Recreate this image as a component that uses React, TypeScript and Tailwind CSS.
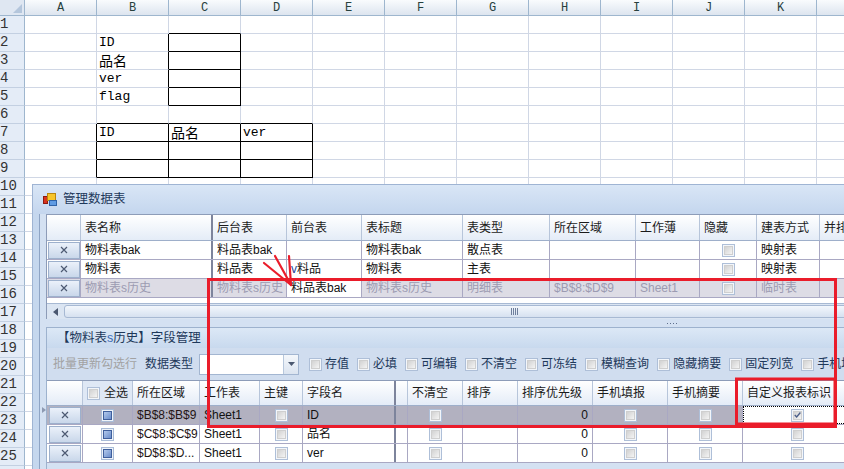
import React from "react";
import clsx from "clsx";

const ui = "font-['Liberation_Sans','Noto_Sans_CJK_SC',sans-serif]";
const sheetFont = "font-['Liberation_Mono','Noto_Sans_CJK_SC',monospace]";

const LETTERS = ["A", "B", "C", "D", "E", "F", "G", "H", "I", "J", "K", "L"];
const ROWS = Array.from({ length: 26 }, (_, i) => i + 1);

const SHEET_TEXT: Record<string, string> = {
  "2-1": "ID",
  "3-1": "品名",
  "4-1": "ver",
  "5-1": "flag",
  "7-1": "ID",
  "7-2": "品名",
  "7-3": "ver",
};

// ruled ranges: C2:C5 and B7:D9
const rightRuled = (r: number, c: number) =>
  ((c === 1 || c === 2) && r >= 2 && r <= 5) || (c <= 3 && r >= 7 && r <= 9);
const bottomRuled = (r: number, c: number) =>
  (c === 2 && r >= 1 && r <= 5) || (c >= 1 && c <= 3 && r >= 6 && r <= 9);

const SheetText = ({ text }: { text: string }) =>
  /[\u4e00-\u9fff]/.test(text) ? (
    <span className="font-['Noto_Sans_CJK_SC',sans-serif] text-[14px] leading-[17px]">{text}</span>
  ) : (
    <span className="text-[13px] leading-[16px]">{text}</span>
  );

function Sheet() {
  return (
    <div className={clsx("flex flex-col", sheetFont)}>
      <div className="flex h-[16px]">
        <div className="flex w-[25px] shrink-0 items-end justify-end border-b border-r border-[#9eb6ce] bg-[#dfe7f2] pb-[2px] pr-[2px]">
          <svg width="9" height="9" viewBox="0 0 9 9">
            <path d="M9 0 L9 9 L0 9 Z" fill="#b4c6dc" />
          </svg>
        </div>
        {LETTERS.map((l) => (
          <div
            key={l}
            className="flex w-[72px] shrink-0 items-center justify-center border-b border-r border-[#9eb6ce] bg-linear-to-b from-[#f9fbfd] to-[#dde5ef] text-[12px] text-[#27413e]"
          >
            {l !== "L" && l}
          </div>
        ))}
      </div>
      {ROWS.map((r) => (
        <div key={r} className="flex h-[18px]">
          <div className="flex w-[25px] shrink-0 items-center border-b border-r border-b-[#c3d0e2] border-r-[#9eb6ce] bg-[#e4ecf7] text-[14px] text-[#333]">
            {r < 26 && r}
          </div>
          {LETTERS.map((l, c) => (
            <div
              key={l}
              className={clsx(
                "flex w-[72px] shrink-0 items-end border-b border-r pl-[2px] text-black",
                rightRuled(r, c) ? "border-r-black" : "border-r-[#d0d7e5]",
                bottomRuled(r, c) ? "border-b-black" : "border-b-[#d0d7e5]"
              )}
            >
              {SHEET_TEXT[`${r}-${c}`] && <SheetText text={SHEET_TEXT[`${r}-${c}`]} />}
            </div>
          ))}
        </div>
      ))}
    </div>
  );
}

const TableIcon = () => (
  <svg width="14" height="13" viewBox="0 0 14 13">
    <rect x="0.5" y="3.5" width="4" height="7" fill="#d8331e" stroke="#8c1a10" />
    <rect x="4.5" y="0.5" width="8" height="7" fill="#f7c52a" stroke="#b9860e" />
    <rect x="6.5" y="7.5" width="7" height="5" fill="#5f9be3" stroke="#2f63a8" />
  </svg>
);

const Check = ({ on = false }: { on?: boolean }) => (
  <span className="flex h-[13px] w-[13px] shrink-0 items-center justify-center border border-[#aebfd8] bg-[#f3f6fa]">
    <span className="flex h-[9px] w-[9px] items-center justify-center border border-[#cfcfcf] bg-linear-to-br from-[#d2d2d2] to-[#f4f4f4]">
      {on && (
        <svg width="9" height="8" viewBox="0 0 9 8">
          <path d="M1 4 L3.4 6.6 L8.2 0.8" fill="none" stroke="#4a5d88" strokeWidth="1.7" />
        </svg>
      )}
    </span>
  </span>
);

const BlueCheck = () => (
  <span className="flex h-[13px] w-[13px] items-center justify-center border border-[#a9bcd8] bg-[#eef3f9]">
    <span className="h-[9px] w-[9px] border border-[#3f5f9c] bg-linear-to-br from-[#b3c9ec] to-[#6a8dcb]" />
  </span>
);

const RowButton = () => (
  <div className="ml-[1px] flex h-[17px] w-[32px] items-center justify-center border border-[#9db0cc] bg-linear-to-b from-[#ebf1fa] to-[#c9d7ea]">
    <svg width="8" height="8" viewBox="0 0 8 8">
      <path d="M1 1 L7 7 M7 1 L1 7" stroke="#4d5a72" strokeWidth="1.2" />
    </svg>
  </div>
);

type Col = { w: string; label: string; sep?: boolean };

const TOP_COLS: Col[] = [
  { w: "w-[34px]", label: "" },
  { w: "w-[132px]", label: "表名称", sep: true },
  { w: "w-[74px]", label: "后台表" },
  { w: "w-[75px]", label: "前台表" },
  { w: "w-[101px]", label: "表标题" },
  { w: "w-[87px]", label: "表类型" },
  { w: "w-[86px]", label: "所在区域" },
  { w: "w-[64px]", label: "工作薄" },
  { w: "w-[57px]", label: "隐藏" },
  { w: "w-[63px]", label: "建表方式" },
  { w: "w-[90px]", label: "并排显示" },
];

const BOTTOM_COLS: Col[] = [
  { w: "w-[36px]", label: "" },
  { w: "w-[50px]", label: "全选" },
  { w: "w-[67px]", label: "所在区域" },
  { w: "w-[60px]", label: "工作表" },
  { w: "w-[43px]", label: "主键" },
  { w: "w-[93px]", label: "字段名", sep: true },
  { w: "w-[12px]", label: "" },
  { w: "w-[55px]", label: "不清空" },
  { w: "w-[55px]", label: "排序" },
  { w: "w-[75px]", label: "排序优先级" },
  { w: "w-[75px]", label: "手机填报" },
  { w: "w-[75px]", label: "手机摘要" },
  { w: "w-[110px]", label: "自定义报表标识" },
];

const TABLES = [
  { name: "物料表bak", back: "料品表bak", front: "", title: "物料表bak", kind: "散点表", area: "", book: "", mode: "映射表" },
  { name: "物料表", back: "料品表", front: "料品", title: "物料表", kind: "主表", area: "", book: "", mode: "映射表" },
  { name: "物料表s历史", back: "物料表s历史", front: "料品表bak", title: "物料表s历史", kind: "明细表", area: "$B$8:$D$9", book: "Sheet1", mode: "临时表", sel: true },
];

const FIELDS = [
  { area: "$B$8:$B$9", book: "Sheet1", name: "ID", sel: true },
  { area: "$C$8:$C$9", book: "Sheet1", name: "品名" },
  { area: "$D$8:$D...", book: "Sheet1", name: "ver" },
];

const Cell = ({
  col,
  line,
  center,
  right,
  className,
  children,
}: {
  col: Col;
  line: string;
  center?: boolean;
  right?: boolean;
  className?: string;
  children?: React.ReactNode;
}) => (
  <div
    className={clsx(
      "flex h-full shrink-0 items-center overflow-hidden whitespace-nowrap",
      col.w,
      col.sep ? "border-r-2 border-r-[#7d849c]" : clsx("border-r", line),
      center ? "justify-center" : right ? "justify-end pr-[4px]" : "pl-[4px]",
      className
    )}
  >
    {children}
  </div>
);

function TableGrid() {
  const line = "border-r-[#a9a8c3]";
  return (
    <div className="flex flex-1 flex-col border-l border-t border-[#8d9cb8] bg-white">
      <div className="flex h-[26px] shrink-0 border-b border-[#9eafca] bg-linear-to-b from-[#ffffff] to-[#e4ecf7] text-[#1b1b1b]">
        {TOP_COLS.map((c) => (
          <Cell key={c.w + c.label} col={c} line="border-r-[#b7c5da]">
            {c.label}
          </Cell>
        ))}
      </div>
      {TABLES.map((t) => (
        <div
          key={t.name}
          className={clsx(
            "flex h-[19px] shrink-0 border-b border-[#a9a8c3]",
            t.sel ? "bg-[#dddce5] text-[#9c9bb2]" : "bg-white text-[#111]"
          )}
        >
          <Cell col={TOP_COLS[0]} line={line} center>
            <RowButton />
          </Cell>
          <Cell col={TOP_COLS[1]} line={line}>{t.name}</Cell>
          <Cell col={TOP_COLS[2]} line={line}>{t.back}</Cell>
          <Cell col={TOP_COLS[3]} line={line} className={t.sel ? "bg-white text-[#111]" : ""}>
            {t.front && !t.sel && <span className="text-[#27459a]">v</span>}
            {t.front}
          </Cell>
          <Cell col={TOP_COLS[4]} line={line}>{t.title}</Cell>
          <Cell col={TOP_COLS[5]} line={line}>{t.kind}</Cell>
          <Cell col={TOP_COLS[6]} line={line}>{t.area}</Cell>
          <Cell col={TOP_COLS[7]} line={line}>{t.book}</Cell>
          <Cell col={TOP_COLS[8]} line={line} center>
            <Check />
          </Cell>
          <Cell col={TOP_COLS[9]} line={line}>{t.mode}</Cell>
          <Cell col={TOP_COLS[10]} line={line} />
        </div>
      ))}
      <div className="h-[5px] shrink-0" />
      {/* horizontal scrollbar */}
      <div className="flex h-[16px] shrink-0 border-t border-[#a7b9d3] bg-[#dbe5f2]">
        <div className="flex w-[17px] shrink-0 items-center justify-center">
          <svg width="5" height="8" viewBox="0 0 5 8">
            <path d="M5 0 L0 4 L5 8 Z" fill="#4b5870" />
          </svg>
        </div>
        <div className="my-[1px] flex flex-1 items-center rounded-l-[3px] border border-[#a7b9d3] bg-linear-to-b from-[#f3f7fc] to-[#d6e1f0]">
          <div className="ml-[446px] flex h-[7px] gap-[1px]">
            <span className="w-px bg-[#6f7f9c]" />
            <span className="w-px bg-[#6f7f9c]" />
            <span className="w-px bg-[#6f7f9c]" />
            <span className="w-px bg-[#6f7f9c]" />
          </div>
        </div>
      </div>
    </div>
  );
}

const OPTIONS = ["存值", "必填", "可编辑", "不清空", "可冻结", "模糊查询", "隐藏摘要", "固定列宽", "手机填报"];

function FieldGrid() {
  const line = "border-r-[#a9a8c3]";
  return (
    <div className="flex flex-col border-t border-[#8d9cb8] bg-white">
      <div className="flex h-[25px] shrink-0 border-b border-[#9eafca] bg-linear-to-b from-[#ffffff] to-[#e4ecf7] text-[#1b1b1b]">
        {BOTTOM_COLS.map((c, i) =>
          i === 1 ? (
            <Cell key={c.w + c.label} col={c} line="border-r-[#b7c5da]" className="gap-[4px] bg-[#dfe8f5]">
              <Check />
              {c.label}
            </Cell>
          ) : (
            <Cell key={c.w + c.label} col={c} line="border-r-[#b7c5da]">
              {c.label}
            </Cell>
          )
        )}
      </div>
      {FIELDS.map((f) => (
        <div
          key={f.area}
          className={clsx(
            "flex h-[19px] shrink-0 border-b border-[#a9a8c3] text-[#111]",
            f.sel ? "bg-[#b2b1c0]" : "bg-white"
          )}
        >
          <Cell col={BOTTOM_COLS[0]} line={line} center>
            <RowButton />
          </Cell>
          <Cell col={BOTTOM_COLS[1]} line={line} center>
            <BlueCheck />
          </Cell>
          <Cell col={BOTTOM_COLS[2]} line={line} className="pl-[3px] text-[#231414]">{f.area}</Cell>
          <Cell col={BOTTOM_COLS[3]} line={line}>{f.book}</Cell>
          <Cell col={BOTTOM_COLS[4]} line={line} center>
            <Check />
          </Cell>
          <Cell col={BOTTOM_COLS[5]} line={line}>{f.name}</Cell>
          <Cell col={BOTTOM_COLS[6]} line={line} />
          <Cell col={BOTTOM_COLS[7]} line={line} center>
            <Check />
          </Cell>
          <Cell col={BOTTOM_COLS[8]} line={line} />
          <Cell col={BOTTOM_COLS[9]} line={line} right>0</Cell>
          <Cell col={BOTTOM_COLS[10]} line={line} center>
            <Check />
          </Cell>
          <Cell col={BOTTOM_COLS[11]} line={line} center>
            <Check />
          </Cell>
          <Cell col={BOTTOM_COLS[12]} line={line} center className={f.sel ? "bg-white" : ""}>
            {f.sel ? (
              <div className="flex h-full w-full items-center justify-center border border-dotted border-black">
                <Check on />
              </div>
            ) : (
              <Check />
            )}
          </Cell>
        </div>
      ))}
    </div>
  );
}

function ManageDialog() {
  return (
    <div
      className={clsx(
        "absolute left-[32px] top-[184px] flex h-[300px] w-[900px] flex-col border-l border-t border-[#9fb4d3] bg-[#c5d7ee] text-[12px] leading-none",
        ui
      )}
    >
      <div className="flex h-[29px] shrink-0 items-center gap-[6px] bg-linear-to-b from-[#d9e6f6] to-[#c4d6ee] pl-[10px] text-[12.5px] text-[#1e395b]">
        <TableIcon />
        <span>管理数据表</span>
      </div>

      <div className="flex flex-1 pl-[6px]">
        <div className="flex flex-1 flex-col border-l border-[#8ea4c5] bg-[#d4e1f2]">
          {/* table list */}
          <div className="flex">
            <div className="w-[6px] shrink-0" />
            <TableGrid />
          </div>

          {/* splitter */}
          <div className="flex h-[8px] shrink-0 items-center pl-[627px]">
            <div className="flex gap-[2px]">
              <span className="h-px w-px bg-[#5f6f8c]" />
              <span className="h-px w-px bg-[#5f6f8c]" />
              <span className="h-px w-px bg-[#5f6f8c]" />
              <span className="h-px w-px bg-[#5f6f8c]" />
            </div>
          </div>

          {/* field manager */}
          <div className="flex flex-1">
            <div className="flex w-[6px] shrink-0 flex-col pl-[2px] pt-[80px]">
              <svg width="4" height="6" viewBox="0 0 4 6">
                <path d="M0 0 L4 3 L0 6 Z" fill="#8d9ab2" />
              </svg>
            </div>
            <div className="flex flex-1 flex-col border-l border-t border-[#9db2ce]">
              <div className="flex h-[20px] shrink-0 items-center bg-linear-to-b from-[#dce8f6] to-[#c8d9ee] pl-[10px] text-[12.5px] text-[#1e395b]">
                【物料表<span className="text-[#3b6bb5]">s</span>历史】字段管理
              </div>
              <div className="flex h-[32px] shrink-0 items-center bg-[#d0ddef] pl-[6px] text-[#1e395b]">
                <span className="text-[#a2a2a2]">批量更新勾选行</span>
                <span className="ml-[8px]">数据类型</span>
                <div className="ml-[6px] flex h-[21px] w-[100px] border border-[#a3b6d1] bg-white">
                  <div className="flex-1" />
                  <div className="flex w-[15px] items-center justify-center border-l border-[#b7c7dc] bg-linear-to-b from-[#f4f7fb] to-[#dbe4f0]">
                    <svg width="7" height="4" viewBox="0 0 7 4">
                      <path d="M0 0 L7 0 L3.5 4 Z" fill="#4b5870" />
                    </svg>
                  </div>
                </div>
                <div className="ml-[10px] flex items-center gap-[8px] whitespace-nowrap">
                  {OPTIONS.map((o) => (
                    <label key={o} className="flex items-center gap-[3px]">
                      <Check />
                      {o}
                    </label>
                  ))}
                </div>
              </div>
              <FieldGrid />
            </div>
          </div>
        </div>
      </div>
    </div>
  );
}

// red marks drawn on top of the window
const Marks = () => (
  <svg className="pointer-events-none absolute left-0 top-0" width="844" height="469" viewBox="0 0 844 469">
    <g fill="none" stroke="#ea1c2a" strokeWidth="3">
      <rect x="208.5" y="279.5" width="627" height="147" />
      <rect x="736.5" y="379" width="98.5" height="45" />
    </g>
    <g fill="none" stroke="#ea1c2a" strokeWidth="2.2" strokeLinecap="round">
      <path d="M275 256 L291 285" />
      <path d="M289 256 L291 285" />
      <path d="M264 263 L291 285" />
    </g>
  </svg>
);

export default function App() {
  return (
    <div className="relative h-[469px] w-[844px] overflow-hidden bg-white">
      <Sheet />
      <ManageDialog />
      <Marks />
    </div>
  );
}
